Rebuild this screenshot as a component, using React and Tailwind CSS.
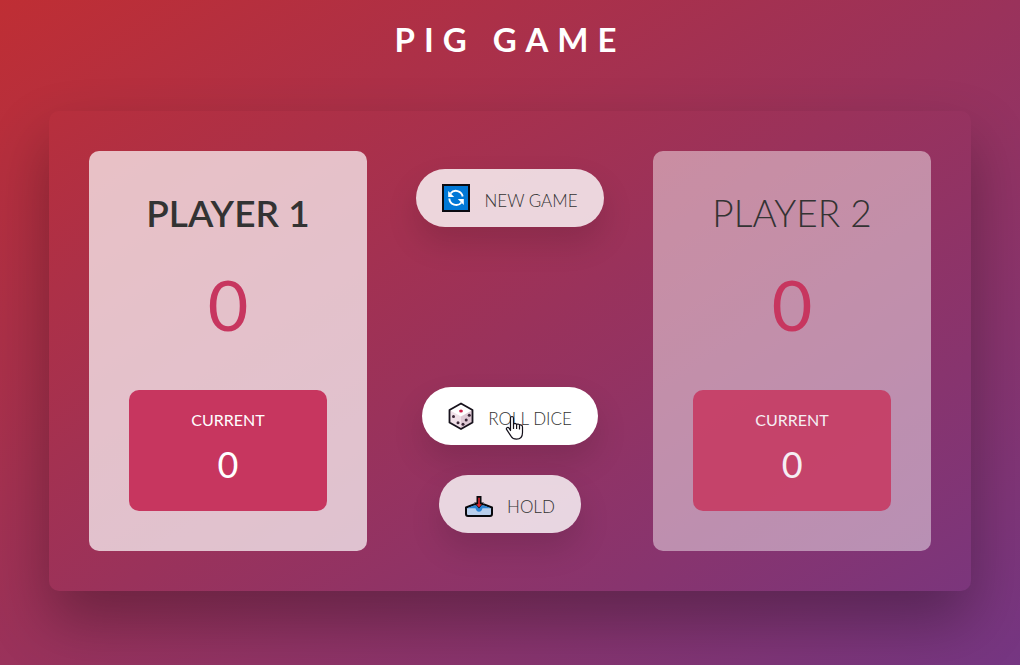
import React, { useState } from "react";

function RefreshIcon() {
  return (
    <svg viewBox="0 0 28 28" className="size-7 shrink-0" aria-hidden="true">
      <rect x="1" y="1" width="26" height="26" fill="#0078d7" stroke="#0b0b12" strokeWidth="2" />
      <g fill="none" stroke="#fff" strokeWidth="1.900">
        <path d="M8.500 9.500A6.900 6.900 0 0 1 20.700 12.500" />
        <path d="M19.500 18.500A6.900 6.900 0 0 1 7.300 14.500" />
      </g>
      <path d="M6.200 7v6h6z" fill="#fff" />
      <path d="M21.800 21v-6h-6z" fill="#fff" />
    </svg>
  );
}

function DiceIcon() {
  return (
    <svg viewBox="1 0 26 28" className="h-7 w-[26px] shrink-0" aria-hidden="true">
      <path d="M14 1.500 25.500 8 14 14.500 2.500 8z" fill="#fff" />
      <path d="M2.500 8 14 14.500V27L2.500 20.500z" fill="#f0e0e8" />
      <path d="M25.500 8 14 14.500V27l11.500-6.500z" fill="#dfc9d5" />
      <path d="M14 1.500 25.500 8v12.500L14 27 2.500 20.500V8z" fill="none" stroke="#17121c" strokeWidth="1.800" strokeLinejoin="round" />
      <ellipse cx="14" cy="9" rx="1.900" ry="1.500" fill="#d0204a" />
      <g fill="#3b2738">
        <circle cx="6.500" cy="14.500" r="1.500" />
        <circle cx="11" cy="20.700" r="1.500" />
        <circle cx="22.300" cy="13.300" r="1.500" />
        <circle cx="19.200" cy="18" r="1.500" />
        <circle cx="16" cy="22.300" r="1.500" />
      </g>
    </svg>
  );
}

function InboxIcon() {
  return (
    <svg viewBox="0 0 28 28" className="size-7 shrink-0" aria-hidden="true">
      <path d="M9 14.500h10l8 3v6.500q0 2-2 2H3q-2 0-2-2v-6.500z" fill="#b9cfed" stroke="#08080c" strokeWidth="2" strokeLinejoin="round" />
      <path d="M9 15.500h10l7 2.700h-8.500q-1 3.600-3.500 3.600t-3.500-3.600H2z" fill="#2b83d4" />
      <path d="M11.500 6h5v6.500h2.500L14 18.500 9 12.500h2.500z" fill="#08080c" />
      <path d="M13.200 7.800h1.600v6.400h2L14 17.500l-2.800-3.300h2z" fill="#e0262f" />
    </svg>
  );
}

function HandPointer() {
  return (
    <svg viewBox="0 0 20 26" className="pointer-events-none absolute left-[82px] top-[28px] h-[26px] w-5" aria-hidden="true">
      <path
        d="M6.500 15.500V3.200q0-1.700 1.500-1.700t1.500 1.700v6.300q.3-1.200 1.500-1.200t1.600 1.500q.4-.9 1.500-.8t1.400 1.400q.3-.6 1.300-.5 1.700.2 1.700 2v5.600q0 6.700-6 6.700-3.700 0-5.500-3l-4.300-6.500q-.8-1.400.3-2 1.200-.6 2.100.4z"
        fill="#fff"
        stroke="#14101a"
        strokeWidth="1.200"
        strokeLinejoin="round"
      />
      <path d="M9.500 9.500V14M12.600 10v4M15.500 11v3.500" stroke="#14101a" strokeWidth="1.200" />
    </svg>
  );
}

function GameButton({ icon, label, highlighted, onClick, children }) {
  return (
    <button
      type="button"
      onClick={onClick}
      className={
        "relative flex h-[58px] items-center gap-3.5 rounded-full px-[26px] text-[17px] font-light uppercase text-[#333] shadow-[0_16px_32px_rgba(0,0,0,0.13)] " +
        (highlighted ? "bg-white" : "bg-white/80")
      }
    >
      {icon}
      <span className="pt-1.5">{label}</span>
      {children}
    </button>
  );
}

function PlayerCard({ name, score, current, active }) {
  return (
    <section
      className={
        "flex w-[33%] flex-col items-center rounded-[10px] p-10 text-[#333] " +
        (active ? "bg-white/70" : "bg-white/45")
      }
    >
      <h2 className={"text-[37px] leading-11 whitespace-nowrap uppercase " + (active ? "font-semibold" : "font-light")}>{name}</h2>
      <p className="mt-[29px] text-[70px] leading-20 font-normal text-[#c7365f]">{score}</p>
      <div
        className={
          "mt-auto flex h-[121px] w-full flex-col items-center rounded-[10px] bg-[#c7365f] pt-[18px] text-white " +
          (active ? "" : "opacity-85")
        }
      >
        <p className="text-base leading-6 uppercase">Current</p>
        <p className="mt-2 text-4xl leading-12">{current}</p>
      </div>
    </section>
  );
}

export default function App() {
  const [active, setActive] = useState(0);
  return (
    <div className="flex min-h-screen flex-col bg-[linear-gradient(to_top_left,#753682_0%,#bf2e34_100%)] px-[49px] pb-[74px] font-[Lato,'Noto_Sans',sans-serif]">
      <h1 className="flex h-[111px] justify-center pt-[17px] text-[33px] leading-11 font-bold tracking-[9px] text-white uppercase">
        Pig Game
      </h1>
      <main className="flex min-h-[480px] flex-1 justify-between rounded-[10px] p-10 shadow-[0_30px_60px_rgba(0,0,0,0.3)]">
        <PlayerCard name="Player 1" score={0} current={0} active={active === 0} />
        <div className="flex flex-col items-center py-[18px]">
          <GameButton icon={<RefreshIcon />} label="New game" onClick={() => setActive(0)} />
          <div className="mt-auto flex flex-col items-center gap-[30px]">
            <GameButton icon={<DiceIcon />} label="Roll dice" highlighted>
              <HandPointer />
            </GameButton>
            <GameButton icon={<InboxIcon />} label="Hold" onClick={() => setActive(1 - active)} />
          </div>
        </div>
        <PlayerCard name="Player 2" score={0} current={0} active={active === 1} />
      </main>
    </div>
  );
}
